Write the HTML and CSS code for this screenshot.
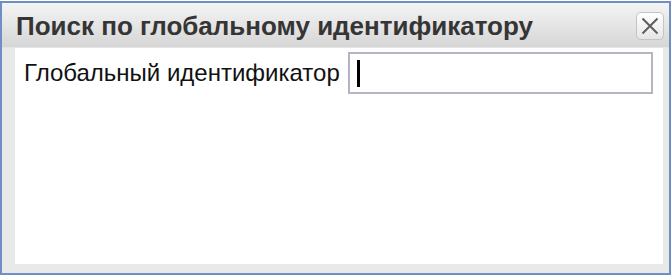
FILE: index.html
```html
<!DOCTYPE html>
<html lang="ru">
<head>
<meta charset="utf-8">
<link rel="stylesheet" href="styles.css">
</head>
<body>
<div class="dialog">
  <div class="titlebar">
    <span class="title">Поиск по глобальному идентификатору</span>
    <button class="close" aria-label="Закрыть">
      <svg width="20" height="20" viewBox="0 0 20 20"><path d="M2.5 2.5 L17.5 17.5 M17.5 2.5 L2.5 17.5" stroke="#5e5e5e" stroke-width="2" fill="none"/></svg>
    </button>
  </div>
  <div class="content">
    <div class="row">
      <label class="label">Глобальный идентификатор</label>
      <div class="input"><span class="caret"></span></div>
    </div>
  </div>
</div>
</body>
</html>
```
FILE: styles.css
```css
html, body {
  margin: 0;
  padding: 0;
  background: #ffffff;
}
body {
  font-family: "Liberation Sans", Arial, sans-serif;
  padding-top: 1px;
}
.dialog {
  box-sizing: border-box;
  width: 671px;
  height: 274px;
  border: 2px solid #6f8ec6;
  background: #e9e9e9;
  display: flex;
  flex-direction: column;
}
.titlebar {
  height: 44px;
  flex: none;
  display: flex;
  align-items: center;
  justify-content: space-between;
  padding: 0 5px 0 14px;
  background: linear-gradient(#f4f4f4, #d6d6d6);
  border-bottom: 1px solid #e4e4e4;
}
.title {
  font-weight: bold;
  font-size: 26px;
  color: #353535;
  padding-top: 3px;
  white-space: nowrap;
}
.close {
  box-sizing: border-box;
  width: 28px;
  height: 28px;
  margin-top: 1px;
  padding: 0;
  display: flex;
  align-items: center;
  justify-content: center;
  border: 1px solid #c4c4c4;
  border-radius: 5px;
  background: linear-gradient(#ffffff, #e6e6e6);
}
.content {
  flex: 1;
  background: #ffffff;
  margin: 0 6px 9px 13px;
}
.row {
  display: flex;
  align-items: center;
  padding: 4px 0 0 9px;
  gap: 8px;
}
.label {
  flex: none;
  white-space: nowrap;
  font-size: 24px;
  color: #111111;
}
.input {
  flex: none;
  box-sizing: border-box;
  width: 305px;
  height: 42px;
  border: 2px solid #b5b5c2;
  background: #ffffff;
  display: flex;
  align-items: center;
  padding-left: 7px;
}
.caret {
  width: 3px;
  height: 27px;
  background: #000000;
}
```
